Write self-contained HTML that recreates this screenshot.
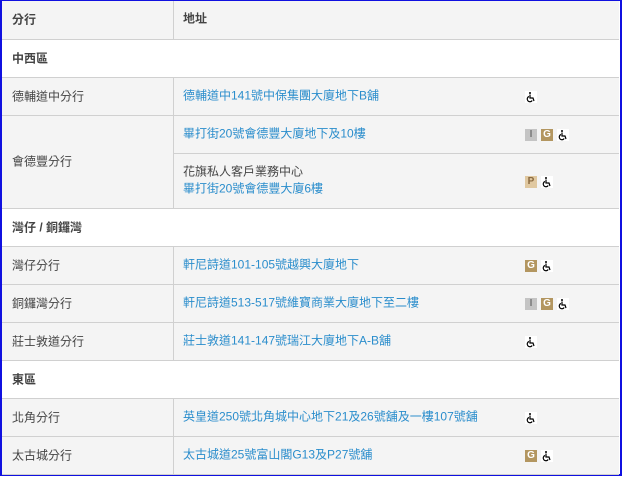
<!DOCTYPE html>
<html><head><meta charset="utf-8"><style>
body{margin:0;width:622px;height:477px;overflow:hidden;background:#fff;font-family:"Liberation Sans","Noto Sans CJK TC",sans-serif;font-size:12px;color:#444}
.frame{position:absolute;left:0;top:0;width:618px;height:473px;border:2px solid #1010e0;border-top-width:1px;border-bottom-width:2px;}
.r{position:absolute;left:2px;width:617px;border-bottom:1px solid #d0d0d0;background:#f4f4f4;box-sizing:border-box}
.w{background:#fff}
.t{position:absolute;left:10px;top:50%;transform:translateY(-55%);white-space:nowrap}
.a{position:absolute;left:181px;top:50%;transform:translateY(-55%);white-space:nowrap;line-height:17px}
.v{position:absolute;left:171px;top:0;bottom:0;border-left:1px solid #d0d0d0}
.b{color:#2a8dcc}
.h{font-weight:bold;color:#444}
.ic{position:absolute;left:523px;top:50%;transform:translateY(-50%);display:flex;gap:4px}
.i{width:12px;height:12px;font-size:10px;font-weight:bold;color:#fff;text-align:center;line-height:12px;display:block}
.sub{position:absolute;left:171px;right:0;border-top:1px solid #d0d0d0}
</style></head><body>
<svg width="0" height="0" style="position:absolute"><defs><symbol id="wc" viewBox="0 0 12 12"><rect width="12" height="12" fill="#fff"/><circle cx="5" cy="2" r="1" fill="#000"/><path d="M5 3.5V7H8L9 10M4 5.5A2.7 2.7 0 1 0 7.2 9.5" fill="none" stroke="#000" stroke-width="1.2"/></symbol></defs></svg>
<div class="frame"></div>
<div class="r" style="top:1px;height:39px"><div class="v"></div><span class="t h">分行</span><span class="a h">地址</span></div>
<div class="r w" style="top:40px;height:38px"><span class="t h">中西區</span></div>
<div class="r" style="top:78px;height:38px"><div class="v"></div><span class="t">德輔道中分行</span><span class="a b">德輔道中141號中保集團大廈地下B舖</span><div class="ic"><svg class="i"><use href="#wc"/></svg></div></div>
<div class="r" style="top:116px;height:93px"><div class="v"></div><span class="t">會德豐分行</span>
<div style="position:absolute;left:0;right:0;top:0;height:37px"><span class="a b">畢打街20號會德豐大廈地下及10樓</span><div class="ic"><span class="i" style="background:#c4c4c4;color:#777">I</span><span class="i" style="background:#b39660">G</span><svg class="i"><use href="#wc"/></svg></div></div>
<div class="sub" style="top:37px;height:55px"><span class="a" style="left:10px">花旗私人客戶業務中心<br><span class="b">畢打街20號會德豐大廈6樓</span></span><div class="ic" style="left:352px"><span class="i" style="background:#e0c8a0;color:#8a6a40">P</span><svg class="i"><use href="#wc"/></svg></div></div></div>
<div class="r w" style="top:209px;height:38px"><span class="t h">灣仔 / 銅鑼灣</span></div>
<div class="r" style="top:247px;height:38px"><div class="v"></div><span class="t">灣仔分行</span><span class="a b">軒尼詩道101-105號越興大廈地下</span><div class="ic"><span class="i" style="background:#b39660">G</span><svg class="i"><use href="#wc"/></svg></div></div>
<div class="r" style="top:285px;height:38px"><div class="v"></div><span class="t">銅鑼灣分行</span><span class="a b">軒尼詩道513-517號維寶商業大廈地下至二樓</span><div class="ic"><span class="i" style="background:#c4c4c4;color:#777">I</span><span class="i" style="background:#b39660">G</span><svg class="i"><use href="#wc"/></svg></div></div>
<div class="r" style="top:323px;height:38px"><div class="v"></div><span class="t">莊士敦道分行</span><span class="a b">莊士敦道141-147號瑞江大廈地下A-B舖</span><div class="ic"><svg class="i"><use href="#wc"/></svg></div></div>
<div class="r w" style="top:361px;height:38px"><span class="t h">東區</span></div>
<div class="r" style="top:399px;height:38px"><div class="v"></div><span class="t">北角分行</span><span class="a b">英皇道250號北角城中心地下21及26號舖及一樓107號舖</span><div class="ic"><svg class="i"><use href="#wc"/></svg></div></div>
<div class="r" style="top:437px;height:38px"><div class="v"></div><span class="t">太古城分行</span><span class="a b">太古城道25號富山閣G13及P27號舖</span><div class="ic"><span class="i" style="background:#b39660">G</span><svg class="i"><use href="#wc"/></svg></div></div>
</body></html>
